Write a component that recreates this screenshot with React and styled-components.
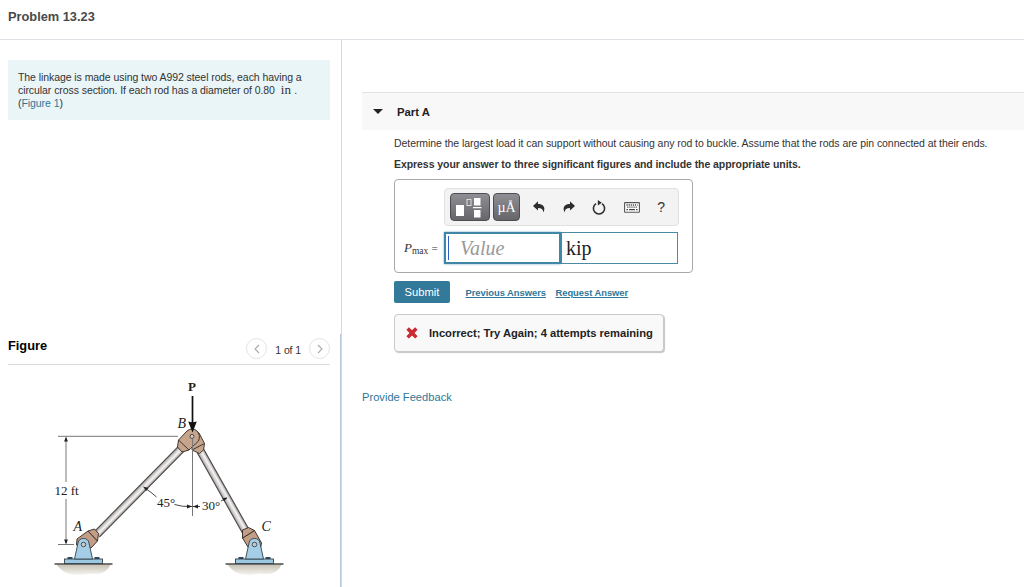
import React, { useState } from 'react';
import styled, { createGlobalStyle } from 'styled-components'





// Pin support drawn around its pin hole, reused for A and C
function Support({ x, y }) {
  return (
    <g transform={`translate(${x} ${y})`}>
      <path d="M-27 20 H27 C24 28 16 31 6 29 C-4 31 -18 33 -27 20Z" fill="url(#ground)" />
      <path d="M-29 19.5 H29" stroke="#4a4a4a" strokeWidth="1.4" />
      <path d="M-16 13.5 h5 M11 13.5 h5" stroke="#2f4a5a" strokeWidth="2" />
      <rect x="-19" y="14.5" width="38" height="4.5" fill="#9cc8e2" stroke="#33414a" strokeWidth="0.9" />
      <path d="M-9 14.5 L-5.5 -1.5 A5.6 5.6 0 0 1 5.5 -1.5 L9 14.5Z" fill="#a5cee6" stroke="#33414a" strokeWidth="0.9" />
      <circle cx="0" cy="0" r="2.3" fill="#c3c9cc" stroke="#4b5359" strokeWidth="1" />
    </g>
  )
}


function Rod({ x, y, angle, length }) {
  return (
    <g transform={`translate(${x} ${y}) rotate(${angle})`}>
      <rect x="0" y="-3.7" width={length} height="7.4" fill="url(#rod)" />
      <path d={`M0 -3.7 H${length} M0 3.7 H${length}`} stroke="#4a4848" strokeWidth="1.1" />
    </g>
  )
}


function LinkageFigure() {
  return (
    <Drawing viewBox="0 365 340 222" width="340" height="222">
      <defs>
        <linearGradient id="rod" x1="0" y1="0" x2="0" y2="1">
          <stop offset="0" stopColor="#9c9999" />
          <stop offset="0.4" stopColor="#f6f4f3" />
          <stop offset="0.65" stopColor="#dcd9d8" />
          <stop offset="1" stopColor="#9b9897" />
        </linearGradient>
        <linearGradient id="ground" x1="0" y1="0" x2="0" y2="1">
          <stop offset="0" stopColor="#c6c1b3" />
          <stop offset="1" stopColor="#f6f5f1" />
        </linearGradient>
      </defs>

      {/* Dimensions */}
      <g stroke="#777" strokeWidth="1" fill="none">
        <path d="M58 436.3 H178" />
        <path d="M66 438 V482 M66 499 V543" />
        <path d="M58 544.5 H74" />
        <path d="M192.5 440 V516" />
      </g>
      <path d="M66 436.5 l-1.9 5 h3.8z M66 544.5 l-1.9 -5 h3.8z" fill="#222" />

      {/* Rods */}
      <Rod x={181} y={449} angle={134.6} length={120} />
      <Rod x={200.5} y={451} angle={60.6} length={92} />

      {/* Joint B */}
      <g fill="#c7a58c" stroke="#3f3530" strokeWidth="1">
        <path d="M194 430 L199 433 L204.5 443.5 L203.5 450 L199.5 453.5 L192 450Z" />
        <path d="M192 450 L204.5 443.5" fill="none" />
        <path d="M178.5 440 L187 431 Q192 427 196.500 430.500 Q201 435 198.500 441 L189 450 L182 452 L177.5 447Z" />
        <path d="M179 440.5 L189 450" fill="none" />
      </g>
      <path d="M192.5 439 V460" stroke="#777" />
      <circle cx="192" cy="436.4" r="2" fill="#d5d2ce" stroke="#4b4541" />

      {/* Clevises A and C */}
      <g fill="#c29e86" stroke="#3f3530" strokeWidth="1">
        <path d="M76.5 545 L77 539 L88 531 L97.5 541 L91 548Z" />
        <path d="M88 531 L94.5 529 L98.5 533.5 L97.5 541Z" />
        <path d="M242.5 538 L254.5 530.5 L261.5 543 L260.5 548 L248 547Z" />
        <path d="M242.5 538 L242.5 530 L248.5 527.5 L254.5 530.5Z" />
      </g>
      <Support x={83.5} y={544.5} />
      <Support x={254.5} y={544.5} />

      {/* Load P */}
      <path d="M192.5 396 V424" stroke="#111" strokeWidth="1.7" />
      <path d="M188.2 421.5 L192.5 432.5 L196.8 421.5 Q192.5 423 188.2 421.5Z" fill="#111" />

      {/* Angles */}
      <g stroke="#333" strokeWidth="0.9" fill="none">
        <path d="M145.5 488.5 Q151 492 156.5 497" />
        <path d="M174.5 504.5 Q182 507 192 506.5" />
        <path d="M192.5 506.5 H200" />
        <path d="M221 501 L227 498" />
      </g>
      <path d="M143 486.5 l5.5 1.4 l-2.4 3z M192 506.5 l-5 -1.9 v3.8z M193 506.5 l5 -1.9 v3.8z M227.5 497.5 l-5.2 0.7 l1.8 3.1z" fill="#222" />

      <DrawingText x="188" y="391" $bold>P</DrawingText>
      <DrawingText x="177.5" y="427.5" $italic>B</DrawingText>
      <DrawingText x="73.5" y="531" $italic>A</DrawingText>
      <DrawingText x="261.5" y="531" $italic>C</DrawingText>
      <DrawingText x="54.5" y="495">12 ft</DrawingText>
      <DrawingText x="157" y="507">45°</DrawingText>
      <DrawingText x="202" y="509.5">30°</DrawingText>
    </Drawing>
  )
}


function UndoIcon() {
  return (
    <svg width="12" height="12" viewBox="0 0 12 12">
      <path d="M0 4.900 L5 0.300 V2.900 C10 3 13 6 10.400 11.500 C10.200 8.400 8.500 7 5 7 V9.500Z" fill="#2d2d2d" />
    </svg>
  )
}





function App() {
  const [value, setValue] = useState('');
  const [unit, setUnit] = useState('kip');

  return (
    <Page>
      <GlobalStyle />
      <Header>Problem 13.23</Header>
      <Columns>
        <Left>
          <Statement>
            The linkage is made using two A992 steel rods, each having a<br />
            circular cross section. If each rod has a diameter of 0.80 <Unit>in</Unit> .<br />
            (<a href="#figure">Figure 1</a>)
          </Statement>
          <FigurePanel id="figure">
            <FigureHeader>
              <h2>Figure</h2>
              <Pager>
                <RoundButton aria-label="Previous">
                  <svg width="8" height="10" viewBox="0 0 8 10"><path d="M6 1 L2 5 L6 9" /></svg>
                </RoundButton>
                <span>1 of 1</span>
                <RoundButton aria-label="Next">
                  <svg width="8" height="10" viewBox="0 0 8 10"><path d="M2 1 L6 5 L2 9" /></svg>
                </RoundButton>
              </Pager>
            </FigureHeader>
            <LinkageFigure />
          </FigurePanel>
        </Left>

        <Right>
          <PartHeader>
            <Caret />
            Part A
          </PartHeader>
          <PartBody>
            <Question>Determine the largest load it can support without causing any rod to buckle. Assume that the rods are pin connected at their ends.</Question>
            <Instruction>Express your answer to three significant figures and include the appropriate units.</Instruction>

            <AnswerBox>
              <Toolbar>
                <DarkButton $width="40px" aria-label="Templates">
                  <svg width="28" height="20" viewBox="0 0 28 20">
                    <path d="M0 7 h8 v11 h-8z M18 0 h6.500 v7.500 h-6.500z M18 12 h6.500 v7.500 h-6.500z M17 9 h8.500 v1.300 h-8.500z" fill="#fff" />
                    <rect x="11" y="1.500" width="4" height="6" fill="none" stroke="#ddd" strokeWidth="1" />
                  </svg>
                </DarkButton>
                <DarkButton $width="27px" aria-label="Symbols">µÅ</DarkButton>
                <Tools>
                  <UndoIcon />
                  <Flipped><UndoIcon /></Flipped>
                  <svg width="14" height="15" viewBox="0 0 14 15">
                    <path d="M4 3.600 A5.600 5.600 0 1 0 10 3.600" fill="none" stroke="#2d2d2d" strokeWidth="1.600" />
                    <path d="M5.800 0 L9.800 2.700 L5.800 5.600Z" fill="#2d2d2d" />
                  </svg>
                  <svg width="16" height="11" viewBox="0 0 16 11">
                    <rect x="0.600" y="0.600" width="14.800" height="9.600" rx="0.500" fill="#fff" stroke="#555" strokeWidth="1.100" />
                    <path d="M2.500 3 h11 M3.200 5.200 h10" stroke="#444" strokeWidth="1.300" strokeDasharray="1.200 0.900" />
                    <path d="M2.500 7.700 h1.500 M5 7.700 h6 M12 7.700 h1.500" stroke="#444" strokeWidth="1.200" />
                  </svg>
                  <Help>?</Help>
                </Tools>
              </Toolbar>
              <AnswerRow>
                <Label><i>P</i><sub>max</sub> <span>=</span></Label>
                <ValueField>
                  <Cursor />
                  <FieldInput $italic value={value} placeholder="Value" onChange={(e) => setValue(e.target.value)} />
                </ValueField>
                <UnitField>
                  <FieldInput value={unit} onChange={(e) => setUnit(e.target.value)} />
                </UnitField>
              </AnswerRow>
            </AnswerBox>

            <Actions>
              <Submit>Submit</Submit>
              <ActionLink href="#previous">Previous Answers</ActionLink>
              <ActionLink href="#request">Request Answer</ActionLink>
            </Actions>

            <Feedback>
              <svg width="12" height="12" viewBox="0 0 12 12">
                <path d="M2.900 0.300 L6 3.300 L9.100 0.300 L11.600 2.700 L8.500 5.900 L11.600 9.200 L9.100 11.600 L6 8.600 L2.900 11.600 L0.400 9.200 L3.500 5.900 L0.400 2.700Z" fill="#cb2a30" />
              </svg>
              <span>Incorrect; Try Again; 4 attempts remaining</span>
            </Feedback>
          </PartBody>
          <ProvideFeedback href="#feedback">Provide Feedback</ProvideFeedback>
        </Right>
      </Columns>
    </Page>
  );
}







// CSS ----------------------------------------------------------------

const GlobalStyle = createGlobalStyle`
	* { box-sizing: border-box; }
	body {
		margin: 0;
		overflow: hidden;
		background: #fff;
		color: #333;
		font-family: "Liberation Sans", Arial, sans-serif;
	}
	a { color: #2f7798; text-decoration: none; }
	svg { display: block; flex: none; }
`

const Page = styled.div`
	display: flex;
	flex-direction: column;
	height: 587px;
`

const Header = styled.header`
	flex: none;
	height: 40px;
	padding: 9px 8px 0;
	border-bottom: 1px solid #dcdfe3;
	font-size: 12.8px;
	line-height: 15px;
	font-weight: bold;
	color: #4a4a4a;
`

const Columns = styled.div`
	display: flex;
	flex: 1;
`

const Left = styled.section`
	display: flex;
	flex-direction: column;
	justify-content: space-between;
	flex: none;
	width: 342px;
	padding-top: 20px;
	border-right: 1px solid #d3d9e0;
`

const Statement = styled.div`
	width: 322px;
	height: 60px;
	margin-left: 8px;
	padding: 11px 10px;
	background: #eaf5f7;
	font-size: 10.5px;
	line-height: 13px;
	letter-spacing: -0.07px;
	white-space: nowrap;
`

const Unit = styled.span`
	margin-left: 3px;
	font-family: "Liberation Serif", serif;
	font-size: 13px;
	line-height: 0;
	letter-spacing: 0.3px;
`

const FigurePanel = styled.div`
	height: 253px;
	border-right: 1px solid #b7c8de;
`

const FigureHeader = styled.div`
	display: flex;
	justify-content: space-between;
	width: 322px;
	height: 31px;
	margin-left: 8px;
	border-bottom: 1px solid #dcdcdc;

	h2 {
		margin: 4px 0 0;
		font-size: 12.8px;
		line-height: 15px;
		color: #000;
	}
`

const Pager = styled.div`
	display: flex;
	height: 29px;
	align-items: center;
	gap: 8px;
	font-size: 10.5px;
	letter-spacing: -0.1px;

	span { padding-top: 3px; }
`

const RoundButton = styled.button`
	display: flex;
	align-items: center;
	justify-content: center;
	width: 21px;
	height: 21px;
	padding: 0;
	border: 1px solid #e4e4e4;
	border-radius: 50%;
	background: #fff;

	path { fill: none; stroke: #aaa; stroke-width: 1.1; }
`

const Drawing = styled.svg`
	overflow: hidden;
`

const DrawingText = styled.text`
	font-family: "Liberation Serif", serif;
	font-size: ${({ $italic }) => ($italic ? '14px' : '13px')};
	font-weight: ${({ $bold }) => ($bold ? 'bold' : 'normal')};
	font-style: ${({ $italic }) => ($italic ? 'italic' : 'normal')};
	fill: #222;
`

const Right = styled.main`
	flex: 1;
	min-width: 0;
	padding: 52px 0 0 20px;
`

const PartHeader = styled.div`
	display: flex;
	align-items: center;
	gap: 14px;
	height: 38px;
	padding-left: 11px;
	border-top: 1px solid #e2e2e2;
	background: #f8f8f8;
	font-size: 11.3px;
	font-weight: bold;
	color: #222;
`

const Caret = styled.i`
	border: 5px solid transparent;
	border-top-color: #222;
	border-bottom: 0;
`

const PartBody = styled.div`
	padding: 7px 0 0 32px;
`

const Question = styled.p`
	margin: 0;
	font-size: 10.5px;
	line-height: 13px;
	letter-spacing: -0.064px;
	white-space: nowrap;
`

const Instruction = styled(Question)`
	margin-top: 8px;
	font-weight: bold;
`

const AnswerBox = styled.div`
	width: 299px;
	height: 94px;
	margin-top: 8px;
	padding: 8px 13px 0 9px;
	border: 1px solid #a9a9a9;
	border-radius: 4px;
`

const Toolbar = styled.div`
	display: flex;
	align-items: center;
	gap: 3px;
	height: 38px;
	margin-left: 40px;
	padding-left: 5px;
	border: 1px solid #e0e0e0;
	border-radius: 4px;
	background: #f3f3f3;
`

const DarkButton = styled.button`
	display: flex;
	align-items: center;
	justify-content: center;
	width: ${({ $width }) => $width};
	height: 28px;
	padding: 0;
	border: 1px solid #4e4e50;
	border-radius: 4px;
	background: linear-gradient(#8e8e94, #66666a);
	color: #fff;
	font-family: "Liberation Serif", serif;
	font-size: 14px;
	line-height: 14px;
	padding-top: 1px;
`

const Tools = styled.div`
	display: flex;
	flex: 1;
	align-items: center;
	justify-content: space-between;
	padding: 0 13px 0 10px;
`

const Flipped = styled.span`
	transform: scaleX(-1);
`

const Help = styled.span`
	font-size: 14px;
	color: #333;
`

const AnswerRow = styled.div`
	display: flex;
	align-items: center;
	margin-top: 6px;
`

const Label = styled.div`
	flex: none;
	width: 40px;
	font-family: "Liberation Serif", serif;
	font-size: 13px;
	white-space: nowrap;

	sub { font-size: 9.5px; line-height: 0; vertical-align: -2px; }
	span { font-size: 11px; }
`

const ValueField = styled.div`
	display: flex;
	align-items: center;
	width: 117px;
	height: 32px;
	padding-left: 2px;
	border: 2px solid #3f85a5;
	box-shadow: 0 0 2px #6aa7c2;
`

const UnitField = styled.div`
	width: 117px;
	height: 32px;
	padding-left: 4px;
	border: 1px solid #4a8aa6;
`

const Cursor = styled.i`
	flex: none;
	width: 1px;
	height: 24px;
	margin-right: 11px;
	background: #2f5fc4;
`

const FieldInput = styled.input`
	width: 100%;
	min-width: 0;
	height: 100%;
	padding: 1px 0 0;
	border: 0;
	outline: 0;
	background: none;
	color: #222;
	font-family: "Liberation Serif", serif;
	font-size: 20px;
	font-style: ${({ $italic }) => ($italic ? 'italic' : 'normal')};

	&::placeholder { color: #999; }
`

const Actions = styled.div`
	display: flex;
	align-items: center;
	margin-top: 8px;
`

const Submit = styled.button`
	width: 56px;
	height: 22px;
	margin-right: 6px;
	padding: 0;
	border: 0;
	border-radius: 2px;
	background: #33799a;
	color: #fff;
	font-family: inherit;
	font-size: 11.2px;
`

const ActionLink = styled.a`
	margin-left: 9.5px;
	font-size: 9.4px;
	font-weight: bold;
	letter-spacing: -0.03px;
	text-decoration: underline;
`

const Feedback = styled.div`
	display: flex;
	align-items: center;
	gap: 11px;
	width: 270px;
	height: 38px;
	margin-top: 11px;
	padding-left: 11px;
	border: 1px solid #c9c9c9;
	border-radius: 4px;
	background: #f9f9f9;
	box-shadow: 1px 1px 1px #c4c4c4;
	color: #222;
	font-size: 11.2px;
	font-weight: bold;
	letter-spacing: -0.02px;
	white-space: nowrap;
`

const ProvideFeedback = styled.a`
	display: inline-block;
	margin-top: 38px;
	font-size: 11.15px;
	line-height: 15px;
`





export default App;
